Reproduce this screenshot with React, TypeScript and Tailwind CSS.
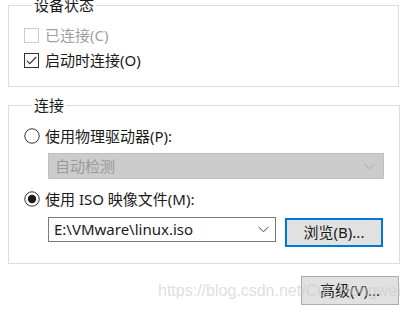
import type { ReactNode } from 'react'

const font = { fontFamily: '"Noto Sans", "Noto Sans CJK SC", sans-serif' }

function Chevron({ color = '#444' }: { color?: string }) {
  return (
    <svg width="11" height="7" viewBox="0 0 11 7" className="shrink-0">
      <path d="M0.5 0.8 L5.5 5.8 L10.5 0.8" fill="none" stroke={color} strokeWidth="1" />
    </svg>
  )
}

function Checkbox({ checked, disabled, label }: { checked?: boolean; disabled?: boolean; label: string }) {
  return (
    <div className="flex h-5 items-center gap-[6px]">
      <span
        className={`flex h-[15px] w-[15px] items-center justify-center border bg-white ${
          disabled ? 'border-[#cccccc]' : 'border-[#333333]'
        }`}
      >
        {checked && (
          <svg width="11" height="9" viewBox="0 0 11 9">
            <path d="M0.8 4.6 L3.8 7.6 L10.2 1" fill="none" stroke="#333" strokeWidth="1.1" />
          </svg>
        )}
      </span>
      <span className={disabled ? 'text-[#a0a0a0]' : 'text-[#1a1a1a]'}>{label}</span>
    </div>
  )
}

function Radio({ checked, label }: { checked?: boolean; label: string }) {
  return (
    <div className="flex h-5 items-center gap-[5px]">
      <svg width="16" height="16" viewBox="0 0 16 16" className="shrink-0">
        <circle cx="8" cy="8" r="7.2" fill="#fff" stroke="#333" strokeWidth="1" />
        {checked && <circle cx="8" cy="8" r="4.2" fill="#1a1a1a" />}
      </svg>
      <span className="text-[#1a1a1a]">{label}</span>
    </div>
  )
}

function Group({ title, className, children }: { title: string; className?: string; children: ReactNode }) {
  return (
    <fieldset className={`mx-[8px] w-[391px] border border-[#dcdcdc] px-[15px] ${className ?? ''}`}>
      <legend className="ml-[8px] px-[2px] leading-5 text-[#1a1a1a]">{title}</legend>
      {children}
    </fieldset>
  )
}

export default function App() {
  return (
    <div className="relative h-[313px] w-[409px] overflow-hidden bg-white text-[15px]" style={font}>
      <div className="flex flex-col">
        {/* 设备状态 */}
        <Group title="设备状态" className="-mt-[5px] pb-[16px]">
          <div className="mt-[10px]">
            <Checkbox disabled label="已连接(C)" />
          </div>
          <div className="mt-[5px]">
            <Checkbox checked label="启动时连接(O)" />
          </div>
        </Group>

        {/* 连接 */}
        <Group title="连接" className="mt-[8px] pb-[16px]">
          <div className="mt-[11px]">
            <Radio label="使用物理驱动器(P):" />
          </div>
          <div className="ml-[24px] mt-[7px] flex h-[26px] w-[336px] items-center justify-between border border-[#bfbfbf] bg-[#cccccc] pl-[6px] pr-[8px] text-[#999999]">
            <span>自动检测</span>
            <Chevron color="#a8a8a8" />
          </div>
          <div className="mt-[10px]">
            <Radio checked label="使用 ISO 映像文件(M):" />
          </div>
          <div className="ml-[24px] mt-[8px] flex h-[30px] items-start gap-[9px]">
            <div className="flex h-[25px] w-[228px] items-center justify-between border border-[#7a7a7a] bg-white pl-[5px] pr-[6px] text-[#1a1a1a]">
              <span>E:\VMware\linux.iso</span>
              <Chevron />
            </div>
            <button className="mt-[1px] flex h-[29px] w-[98px] items-center justify-center border-2 border-[#0078d7] bg-[#e1e1e1] text-[#1a1a1a]">
              浏览(B)...
            </button>
          </div>
        </Group>

        <button className="mr-[10px] mt-[12px] flex h-[29px] w-[98px] items-center justify-center self-end border border-[#adadad] bg-[#e1e1e1] text-[#1a1a1a]">
          高级(V)...
        </button>
      </div>

      {/* watermark */}
      <div
        className="pointer-events-none absolute left-[158px] top-[281px] whitespace-nowrap text-[16px] leading-5 text-[#c8c8c8]/60"
        style={{ fontFamily: '"Liberation Sans", Arial, sans-serif' }}
      >
        https://blog.csdn.net/Cui_Hongwei
      </div>
    </div>
  )
}
